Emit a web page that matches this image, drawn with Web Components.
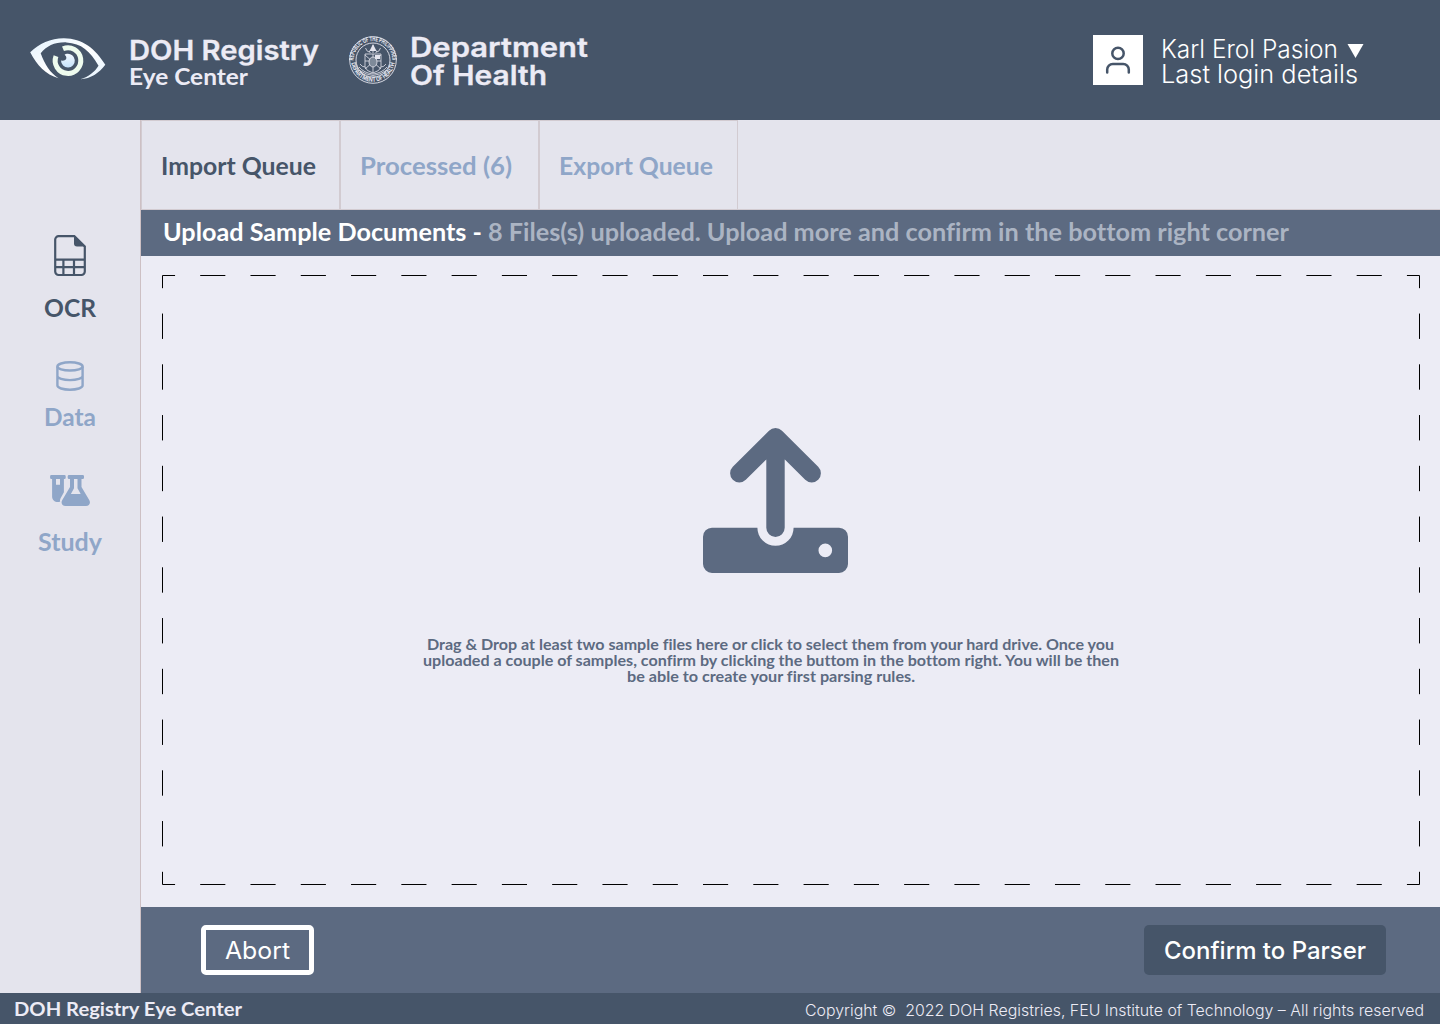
<!DOCTYPE html>
<html lang="en">
<head>
<meta charset="utf-8">
<title>DOH Registry Eye Center</title>
<style>
html,body{margin:0;padding:0}
body{width:1440px;height:1024px;overflow:hidden;font-family:Lato,"Liberation Sans",sans-serif;font-variant-ligatures:none;background:#ececf5}
</style>
</head>
<body>
<registry-app></registry-app>
<script>
const define = (name, html, setup) => customElements.define(name, class extends HTMLElement {
  connectedCallback() {
    if (this.shadowRoot) return;
    const t = document.createElement('template');
    t.innerHTML = html;
    this.attachShadow({ mode: 'open' }).append(t.content.cloneNode(true));
    if (setup) setup(this, this.shadowRoot);
  }
});

// One line of text set to an exact measure.
define('fit-label', `<style>
:host{display:block;white-space:nowrap;line-height:1;font-variant-ligatures:none}
span{display:inline-block;transform-origin:0 50%}
</style><span><slot></slot></span>`, (host, root) => {
  const w = +host.getAttribute('measure');
  const span = root.querySelector('span');
  host.style.width = w + 'px';
  span.style.transform = 'scaleX(' + w / span.getBoundingClientRect().width + ')';
});

define('eye-logo', `<style>:host{display:block;width:76px;height:42px}svg{display:block}</style>
<svg width="76" height="42" viewBox="30 38 76 42">
<defs><linearGradient id="a" x1="0" y1="0" x2="1" y2="1"><stop offset="0" stop-color="#e2f1fd"/><stop offset=".5" stop-color="#fff"/><stop offset="1" stop-color="#e6f3fe"/></linearGradient>
<linearGradient id="b" x1="0" y1="0" x2="0" y2="1"><stop offset="0" stop-color="#f2f8ff"/><stop offset="1" stop-color="#c5e2fa"/></linearGradient></defs>
<path fill="url(#a)" d="M30.2 52.3C39 43.5 51 38.2 64 38.3C83 38.600 95 48.500 105.300 64.700C99 73 91 78.600 80.300 79.200C89 76.500 94.500 72 98.500 65.700C90 51 81.500 43.200 66.500 42.400C55 42 46.500 46 40.700 53.200C45 65 50 72.500 58.500 78.200C45.500 74.500 37 65.500 30.200 52.300Z"/>
<path fill="none" stroke="#eefbee" stroke-width="5" d="M63 48.800A12.800 12.800 0 1 1 56 56.100"/>
<path fill="url(#b)" d="M67 53.800A6.900 6.900 0 1 1 61 60.600Q65.800 61.200 66.400 58Q66.500 56 64.600 54.700Q65.700 54 67 53.800Z"/>
</svg>`);

define('doh-seal', `<style>:host{display:block;width:48px;height:48px}svg{display:block}text{font:700 6.300px Inter,sans-serif;fill:#e9eaf3;text-anchor:middle}</style>
<svg width="48" height="48" viewBox="0 0 48 48" fill="none" stroke="#e4e5ee">
<defs><path id="t" d="M4.700 26.500A19.400 19.400 0 1 1 43.300 26.500"/><path id="u" d="M2.200 24A21.800 21.800 0 0 0 45.800 24"/></defs>
<circle cx="24" cy="24" r="23.300" stroke-width=".9"/><circle cx="24" cy="24" r="17" stroke-width=".9"/>
<g stroke="none"><text><textPath href="#t" startOffset="50%" textLength="60" lengthAdjust="spacingAndGlyphs">REPUBLIC OF THE PHILIPPINES</textPath></text>
<text><textPath href="#u" startOffset="50%" textLength="62" lengthAdjust="spacingAndGlyphs">DEPARTMENT OF HEALTH</textPath></text></g>
<g stroke-width=".8"><path d="M16 18h16v13q-1 4-8 6q-7-2-8-6zM24 18v19M16 25h16M16 19l16 14M32 19L16 33"/><ellipse cx="24" cy="26" rx="4" ry="5" fill="#7e8a99"/>
<path d="M24 9v8M20 16q4-6 8 0M16.500 12q1 4 5 4.500M31.500 12q-1 4-5 4.500M10 31q5 6 14 7q9-1 14-7M11 28q2 3 5 3M37 28q-2 3-5 3M10 34q7 5 14 5.500q7-.5 14-5.500"/></g>
<path fill="#e4e5ee" stroke="none" d="M26 19h5v4h-5zM22.500 11l1.500-3 1.500 3 2 4h-7z"/>
</svg>`);

define('user-box', `<style>:host{display:block;width:50px;height:50px;background:#fff}svg{display:block}</style>
<svg width="50" height="50" fill="none" stroke="#465569" stroke-width="2.500" stroke-linecap="round"><circle cx="25" cy="18.400" r="5.700"/><path d="M14.200 37.400v-2.900a5.600 5.600 0 0 1 5.600-5.600h10.400a5.600 5.600 0 0 1 5.600 5.600v2.900"/></svg>`);

define('sheet-icon', `<style>:host{display:block;width:34px;height:43px}svg{display:block}</style>
<svg width="34" height="43" viewBox="53 234 34 43" fill="none" stroke="#465569" stroke-width="2.200"><path d="M74.300 236.200H58.600a3.400 3.400 0 0 0-3.400 3.400v32a3.400 3.400 0 0 0 3.400 3.400h22.800a3.400 3.400 0 0 0 3.400-3.400v-25.200zM55 259.700h30M55 267.200h30M63.400 259.700V275M74 259.700V275"/><path fill="#465569" stroke="none" d="M74 235.400l11.600 11H77a3 3 0 0 1-3-3z"/></svg>`);

define('data-icon', `<style>:host{display:block;width:28px;height:30px}svg{display:block}</style>
<svg width="28" height="30" viewBox="56 361 28 30" fill="none" stroke="#8fa6c8" stroke-width="2.400"><ellipse cx="70" cy="366.400" rx="12.600" ry="4.100"/><path d="M57.400 366.400v19.200c0 2.300 5.600 4.100 12.600 4.100s12.600-1.800 12.600-4.100v-19.200M57.400 376c0 2.300 5.600 4.100 12.600 4.100s12.600-1.800 12.600-4.100"/></svg>`);

define('study-icon', `<style>:host{display:block;width:40px;height:31px}svg{display:block}</style>
<svg width="40" height="31" viewBox="50 475 40 31" fill="#8fa6c8" fill-rule="evenodd"><path d="M51.400 475h13a1.300 1.300 0 0 1 1.300 1.300v1.400a1.300 1.300 0 0 1-1.300 1.300h-.5v13.200l-3.300 6.100q-1 2-.4 3.100-1 .7-2.300.7c-3.300 0-5.800-2.500-5.800-5.700V479h-.7a1.300 1.300 0 0 1-1.300-1.300v-1.400A1.300 1.300 0 0 1 51.400 475zM56 479v5.800h4V479z"/>
<path d="M69 475h13.700a1.300 1.300 0 0 1 1.300 1.300v1.400a1.300 1.300 0 0 1-1.300 1.300h-1.200v8l7.700 13.100c1.800 3 .1 5.900-3.200 5.900H65.500c-3.300 0-5-2.900-3.200-5.900l7.700-13.100v-8h-1a1.300 1.300 0 0 1-1.300-1.300v-1.400A1.300 1.300 0 0 1 69 475zM74 479v9.300L70.900 494h9.800l-3.200-5.700V479z"/></svg>`);

define('upload-icon', `<style>:host{display:block;width:145px;height:145px}svg{display:block}</style>
<svg width="145" height="145" fill="#5c6a81"><path fill-rule="evenodd" d="M9 99.700H54.400a18.100 18.100 0 0 0 36.200 0H136a9 9 0 0 1 9 9V136a9 9 0 0 1-9 9H9a9 9 0 0 1-9-9V108.700a9 9 0 0 1 9-9zM122.300 115.600a6.800 6.800 0 1 0 0 13.600a6.800 6.800 0 1 0 0-13.600z"/>
<path fill="none" stroke="#5c6a81" stroke-width="18.400" stroke-linecap="round" stroke-linejoin="round" d="M72.500 9.200V99.800M36.300 45.300L72.500 9.200L108.700 45.300"/></svg>`);

define('app-header', `<style>
:host{display:flex;height:120px;box-sizing:border-box;background:#465569;color:#ecebf5;padding-left:30px}
eye-logo{margin-top:38px}
.brand{padding:37px 0 0 23px;width:198px}
.big{font:600 26.500px/27px Inter,sans-serif;-webkit-text-stroke:.3px #ecebf5}
.sub{font:700 23px/26px Lato,sans-serif;margin-top:-1px}
doh-seal{margin:36px 0 0 22px}
.dept{padding:33px 0 0 13px;width:696px;box-sizing:border-box}
.dept .big{line-height:28px}
user-box{margin-top:35px}
.user{padding:37px 0 0 18px;color:#fff;font:300 25px/25px Inter,sans-serif}
.user fit-label{line-height:25px}
.row{display:flex}
.row svg{margin:7px 0 0 9px}
</style>
<eye-logo></eye-logo>
<div class="brand"><fit-label class="big" measure="190">DOH Registry</fit-label><fit-label class="sub" measure="119">Eye Center</fit-label></div>
<doh-seal></doh-seal>
<div class="dept"><fit-label class="big" measure="178">Department</fit-label><fit-label class="big" measure="137">Of Health</fit-label></div>
<user-box></user-box>
<div class="user"><div class="row"><fit-label measure="177">Karl Erol Pasion</fit-label><svg width="17" height="14"><path fill="#fff" d="M.5 0h16L8.500 14z"/></svg></div><fit-label measure="197">Last login details</fit-label></div>`);

define('nav-item', `<style>
:host{display:flex;flex-direction:column;align-items:center;color:#8fa6c8;font:700 24px/30px Lato,sans-serif}
:host([active]){color:#465569}
</style><slot name="icon"></slot><slot></slot>`);

define('side-nav', `<style>
:host{display:block;width:141px;box-sizing:border-box;border-right:1px solid #cdc0c4;background:#e4e4ed;padding-top:114px}
fit-label{line-height:30px}
.o{margin-top:16px}.d{margin:38px 0 0}.d fit-label{margin-top:11px}.s{margin-top:43px}.s fit-label{margin-top:21px}
</style>
<nav-item active><sheet-icon slot="icon"></sheet-icon><fit-label class="o" measure="52">OCR</fit-label></nav-item>
<nav-item class="d"><data-icon slot="icon"></data-icon><fit-label measure="52">Data</fit-label></nav-item>
<nav-item class="s"><study-icon slot="icon"></study-icon><fit-label measure="64">Study</fit-label></nav-item>`);

define('tab-item', `<style>
:host{display:block;width:199px;height:90px;box-sizing:border-box;border:1px solid #d2cbd1;padding:30px 0 0 19px;color:#8fa6c8;font:700 24px/30px Lato,sans-serif}
:host([active]){color:#465569}
</style><slot></slot>`);

define('tab-bar', `<style>
:host{display:flex;height:90px;background:#e4e4ed;box-shadow:inset 0 -1px #d2cbd1}
fit-label{line-height:30px}
</style>
<tab-item active><fit-label measure="155">Import Queue</fit-label></tab-item><tab-item><fit-label measure="152">Processed (6)</fit-label></tab-item><tab-item><fit-label measure="154">Export Queue</fit-label></tab-item>`);

define('status-bar', `<style>
:host{display:flex;height:46px;background:#5c6a81;color:#fff;padding:7px 0 0 22px;box-sizing:border-box;font:700 24px/30px Lato,sans-serif}
fit-label{line-height:30px}.m{color:#abb4c3;margin-left:6px}
</style><fit-label measure="319">Upload Sample Documents -</fit-label><fit-label class="m" measure="801">8 Files(s) uploaded. Upload more and confirm in the bottom right corner</fit-label>`);

define('drop-zone', `<style>
:host{display:grid;height:651px;box-sizing:border-box;padding:19px 20px 22px 21px;background:#ececf5}
svg,.c{grid-area:1/1}
svg{display:block}
.c{display:flex;flex-direction:column;align-items:center;color:#5c6a81;font:700 15px/16px Lato,sans-serif;padding-top:153px}
upload-icon{margin:0 31px 63px 0}
.t{display:flex;flex-direction:column;align-items:center;margin-right:41px}
fit-label{line-height:16px}
</style>
<svg width="1258" height="610" fill="none" stroke="#000"><g stroke-dasharray="25.140 25.140" stroke-dashoffset="12.570"><path d="M.5 .5H1257.500M.5 609.500H1257.500"/></g><g stroke-dasharray="25.375 25.375" stroke-dashoffset="12.690"><path d="M.5 .5V609.500M1257.500 .5V609.500"/></g></svg>
<div class="c"><upload-icon></upload-icon><div class="t"><fit-label measure="687">Drag &amp; Drop at least two sample files here or click to select them from your hard drive. Once you</fit-label><fit-label measure="696">uploaded a couple of samples, confirm by clicking the buttom in the bottom right. You will be then</fit-label><fit-label measure="288">be able to create your first parsing rules.</fit-label></div></div>`);

define('action-button', `<style>
:host{display:flex;box-sizing:border-box;height:50px;align-items:center;justify-content:center;border-radius:5px;background:#465569;color:#fff;width:242px;font:500 24px/30px Inter,sans-serif;padding-top:2px}
:host([outline]){width:113px;background:none;border:5px solid #fff;font-weight:400}
</style><slot></slot>`);

define('action-bar', `<style>
:host{display:flex;justify-content:space-between;height:86px;box-sizing:border-box;background:#5c6a81;padding:18px 54px 0 60px}
fit-label{line-height:30px}
</style><action-button outline><fit-label measure="65">Abort</fit-label></action-button><action-button><fit-label measure="202">Confirm to Parser</fit-label></action-button>`);

define('app-footer', `<style>
:host{display:flex;justify-content:space-between;height:31px;box-sizing:border-box;background:#465569;color:#ecebf5;padding:3px 16px 0 14px}
.l{font:700 19.500px/25px Lato,sans-serif}.r{font:300 15.500px/30px Inter,sans-serif}
</style><fit-label class="l" measure="228">DOH Registry Eye Center</fit-label><fit-label class="r" measure="619">Copyright ©&nbsp; 2022 DOH Registries, FEU Institute of Technology – All rights reserved</fit-label>`);

define('registry-app', `<style>
:host{display:block;width:1440px;height:1024px}
.body{display:flex;height:873px}
main{width:1299px}
</style>
<app-header></app-header>
<div class="body"><side-nav></side-nav><main><tab-bar></tab-bar><status-bar></status-bar><drop-zone></drop-zone><action-bar></action-bar></main></div>
<app-footer></app-footer>`);
</script>
</body>
</html>
